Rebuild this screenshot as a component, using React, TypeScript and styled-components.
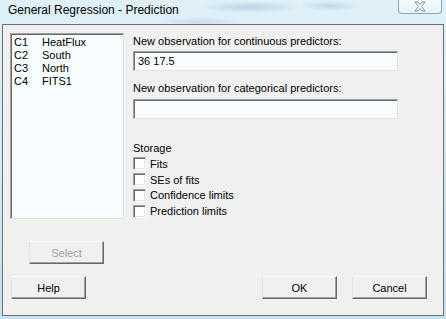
import React from "react";
import styled, { createGlobalStyle } from "styled-components";

const Global = createGlobalStyle`
  html, body { margin: 0; padding: 0; }
  body { width: 446px; height: 319px; overflow: hidden; }
  * { box-sizing: border-box; }
`;

const Window = styled.div`
  width: 446px;
  height: 319px;
  display: flex;
  flex-direction: column;
  background:
    radial-gradient(ellipse 50px 6px at 250px 7px, rgba(120,160,190,0.35), transparent),
    radial-gradient(ellipse 30px 5px at 330px 6px, rgba(120,160,190,0.3), transparent),
    radial-gradient(ellipse 40px 5px at 200px 22px, rgba(140,170,200,0.25), transparent),
    linear-gradient(180deg, #dff0f8 0%, #d4eaf5 40%, #c6e2f0 100%);
  font-family: "Liberation Sans", Arial, sans-serif;
`;

const TitleBar = styled.div`
  height: 24px;
  display: flex;
  align-items: flex-start;
  justify-content: space-between;
  padding-left: 8px;
  padding-right: 4px;
`;

const Title = styled.div`
  font-size: 12px;
  line-height: 12px;
  padding-top: 4px;
  color: #000;
`;

const CloseButton = styled.div`
  width: 44px;
  height: 15px;
  margin-top: -1px;
  border: 1px solid #8ea6b8;
  border-top: none;
  border-radius: 0 0 4px 4px;
  background: linear-gradient(180deg, rgba(255,255,255,0.6), rgba(235,245,251,0.7));
  display: flex;
  align-items: center;
  justify-content: center;
`;

const Client = styled.div`
  margin: 0 2px 3px 2px;
  flex: 1;
  background: #f0f0f0;
  border: 1px solid #707070;
  display: flex;
  flex-direction: column;
`;

const TopRow = styled.div`
  display: flex;
  margin-top: 8px;
  padding-left: 7px;
  height: 186px;
`;

const ListBox = styled.div`
  width: 114px;
  height: 186px;
  background: #f7fdff;
  border-style: solid;
  border-width: 1px;
  border-color: #a0a0a0 #e3e3e3 #e3e3e3 #a0a0a0;
  box-shadow: inset 1px 1px 0 #696969;
  padding: 2px 0 0 3px;
`;

const ListRow = styled.div`
  display: flex;
  font-size: 11px;
  line-height: 13px;
  color: #000;
`;

const ColId = styled.span`
  width: 28px;
`;

const RightCol = styled.div`
  margin-left: 9px;
  display: flex;
  flex-direction: column;
`;

const Label = styled.div<{ $top: number; $bottom: number }>`
  font-size: 11px;
  line-height: 13px;
  color: #000;
  margin-top: ${(p) => p.$top}px;
  margin-bottom: ${(p) => p.$bottom}px;
`;

const TextInput = styled.div`
  width: 265px;
  height: 20px;
  background: #f9fdff;
  border-style: solid;
  border-width: 1px;
  border-color: #a0a0a0 #e3e3e3 #e3e3e3 #a0a0a0;
  box-shadow: inset 1px 1px 0 #696969;
  font-size: 11px;
  line-height: 18px;
  padding-left: 4px;
  color: #000;
`;

const CheckRow = styled.div`
  display: flex;
  align-items: center;
  height: 16px;
  font-size: 11px;
  color: #000;
`;

const Box = styled.span`
  width: 13px;
  height: 13px;
  margin-right: 4px;
  background: #fbfdfe;
  border-style: solid;
  border-width: 1px;
  border-color: #a0a0a0 #fff #fff #a0a0a0;
  box-shadow: inset 1px 1px 0 #696969, inset -1px -1px 0 #e3e3e3;
`;

const SelectRow = styled.div`
  margin-top: 22px;
  padding-left: 26px;
  display: flex;
`;

const Footer = styled.div`
  margin-top: 12px;
  padding: 0 16px 0 8px;
  display: flex;
  justify-content: space-between;
`;

const ButtonGroup = styled.div`
  display: flex;
  gap: 15px;
`;

const Button = styled.div<{ $disabled?: boolean }>`
  width: 75px;
  height: 23px;
  background: #f0f0f0;
  border-style: solid;
  border-width: 1px;
  border-color: #ffffff #696969 #696969 #e3e3e3;
  box-shadow: inset -1px -1px 0 #a0a0a0;
  display: flex;
  align-items: center;
  justify-content: center;
  font-size: 11px;
  color: ${(p) => (p.$disabled ? "#a0a0a0" : "#000")};
`;

const columns = [
  ["C1", "HeatFlux"],
  ["C2", "South"],
  ["C3", "North"],
  ["C4", "FITS1"],
];

const storage = ["Fits", "SEs of fits", "Confidence limits", "Prediction limits"];

export default function App() {
  return (
    <>
      <Global />
      <Window>
        <TitleBar>
          <Title>General Regression - Prediction</Title>
          <CloseButton>
            <svg width="14" height="11" viewBox="0 0 14 11">
              <path
                d="M2 1 L5 1 L7 3.5 L9 1 L12 1 L8.6 5.5 L12 10 L9 10 L7 7.5 L5 10 L2 10 L5.4 5.5 Z"
                fill="#f4f8fb"
                stroke="#7d8790"
                strokeWidth="0.9"
                strokeLinejoin="round"
              />
            </svg>
          </CloseButton>
        </TitleBar>
        <Client>
          <TopRow>
            <ListBox>
              {columns.map(([id, name]) => (
                <ListRow key={id}>
                  <ColId>{id}</ColId>
                  <span>{name}</span>
                </ListRow>
              ))}
            </ListBox>
            <RightCol>
              <Label $top={2} $bottom={3}>New observation for continuous predictors:</Label>
              <TextInput>36 17.5</TextInput>
              <Label $top={11} $bottom={4}>New observation for categorical predictors:</Label>
              <TextInput />
              <Label $top={23} $bottom={1}>Storage</Label>
              {storage.map((s) => (
                <CheckRow key={s}>
                  <Box />
                  {s}
                </CheckRow>
              ))}
            </RightCol>
          </TopRow>
          <SelectRow>
            <Button $disabled>Select</Button>
          </SelectRow>
          <Footer>
            <Button>Help</Button>
            <ButtonGroup>
              <Button>OK</Button>
              <Button>Cancel</Button>
            </ButtonGroup>
          </Footer>
        </Client>
      </Window>
    </>
  );
}
